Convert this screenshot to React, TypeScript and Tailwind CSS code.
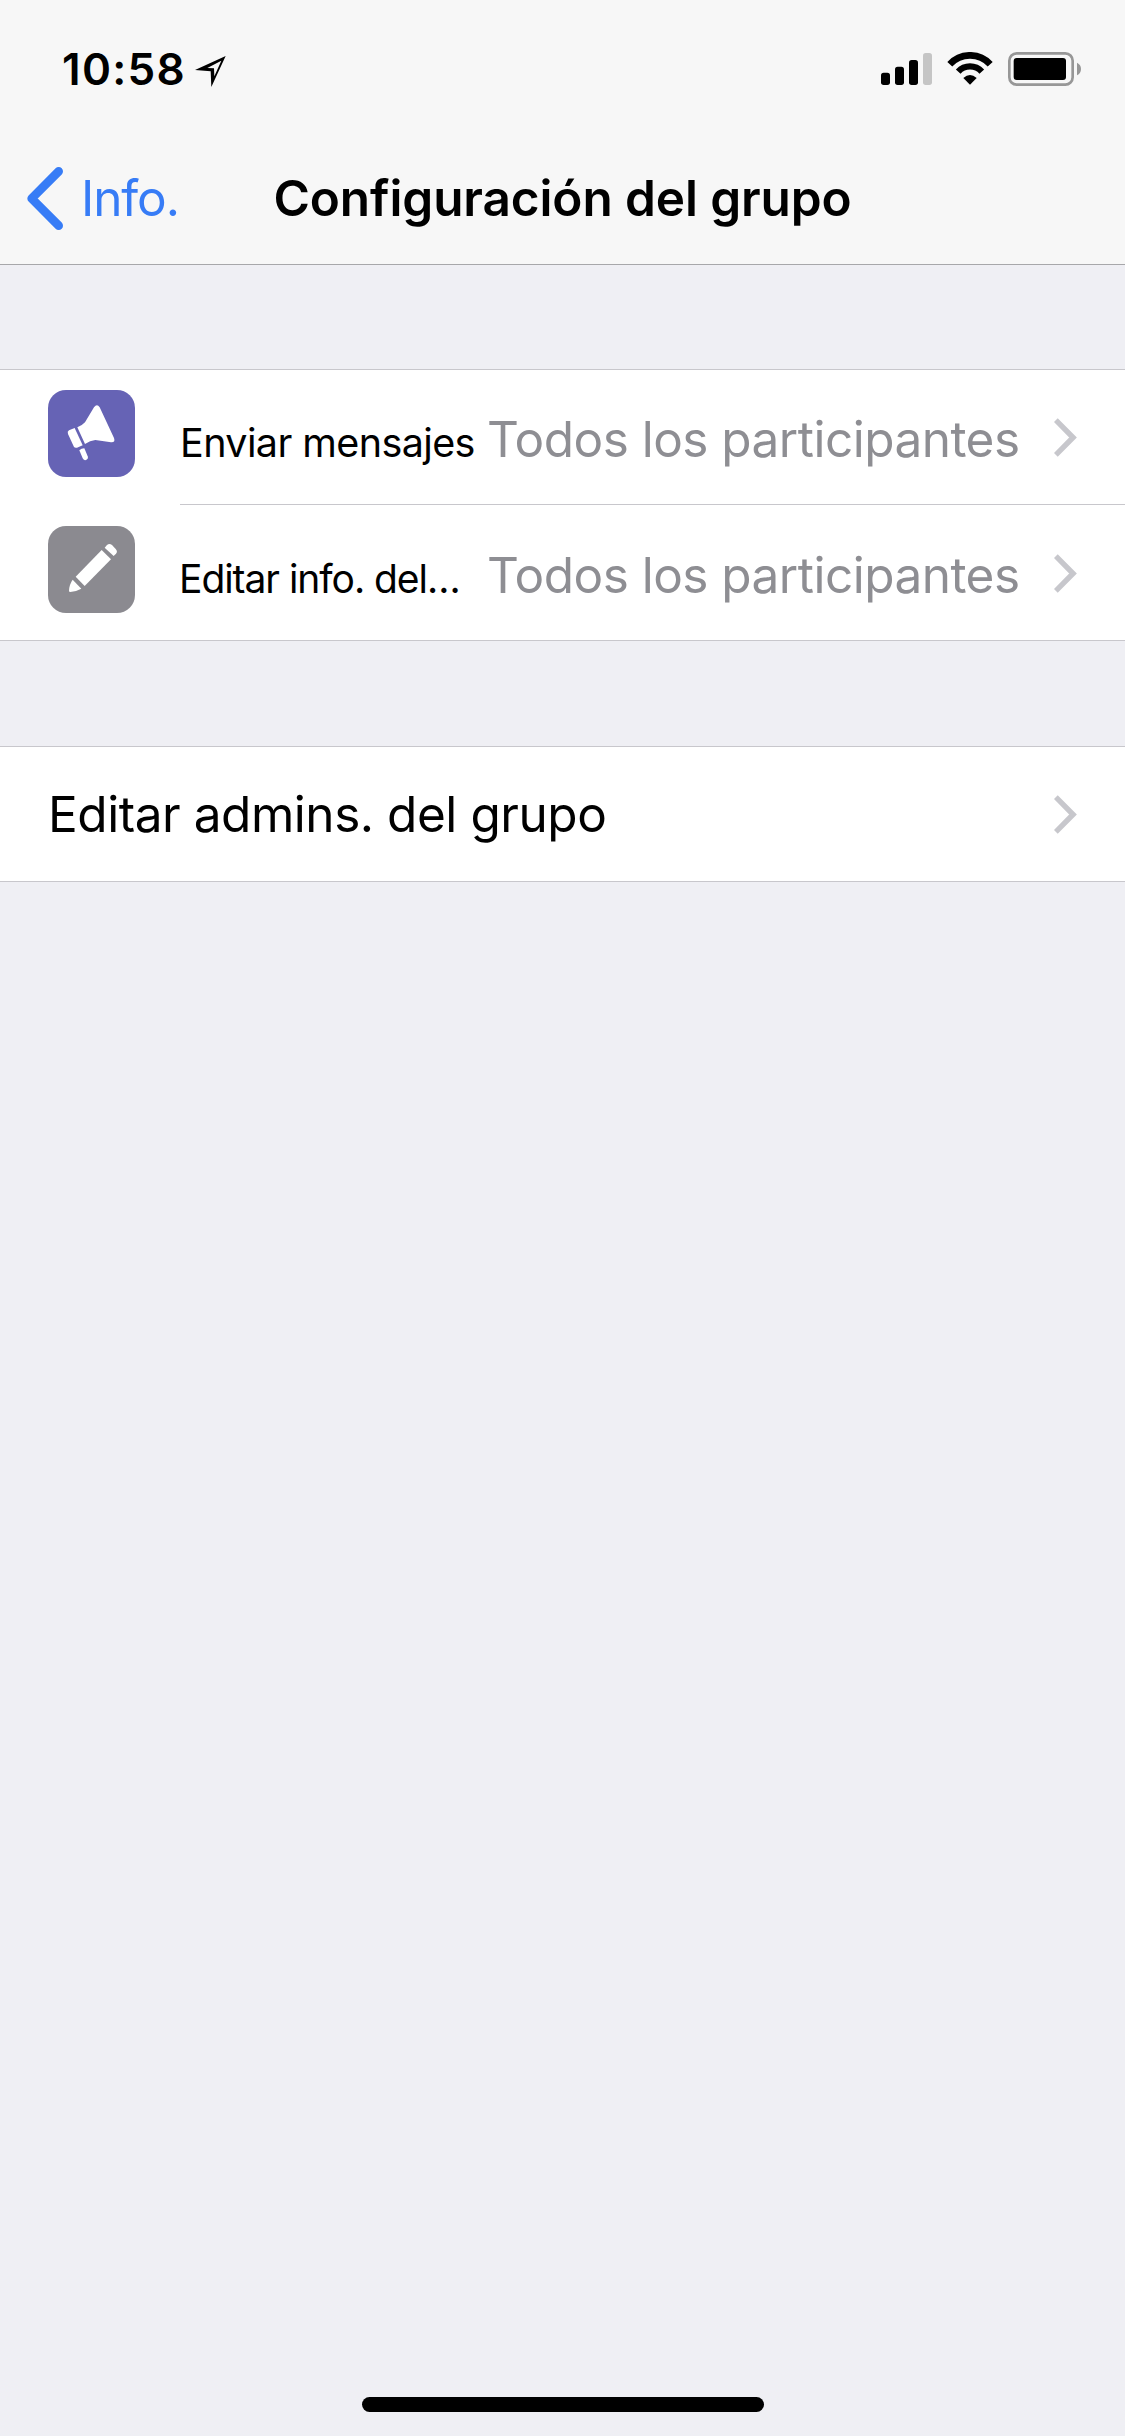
import type { ReactNode } from 'react';

function LocationIcon() {
  return (
    <svg viewBox="24 12 102 102" className="w-[34px] h-[34px] mt-0.5 ml-[8px]">
      <path fill="#000" fillRule="evenodd" d="M119 18 27 60 74 64 76 111ZM106 32 64 54 84 55 85 79Z" />
    </svg>
  );
}

function SignalIcon() {
  return (
    <svg viewBox="63 66 153 102" className="w-[51px] h-[34px]">
      <rect x="63" y="128" width="27" height="37" rx="8" />
      <rect x="105" y="110" width="27" height="55" rx="8" />
      <rect x="147" y="90" width="27" height="75" rx="8" />
      <rect x="189" y="69" width="27" height="96" rx="8" fill="#c5c5c5" />
    </svg>
  );
}

function WifiIcon() {
  return (
    <svg viewBox="21 21 138 102" className="w-[46px] h-[34px]">
      <path d="M29.4 57.7A82 82 0 0 1 150.6 57.7" fill="none" stroke="#000" strokeWidth="20" />
      <path d="M54.6 79.6A48 48 0 0 1 125.4 79.6" fill="none" stroke="#000" strokeWidth="19" />
      <path d="M70 99Q90 81 110 99L90 119Z" />
    </svg>
  );
}

function BatteryIcon() {
  return (
    <svg viewBox="444 66 219 102" className="w-[73px] h-[34px]">
      <rect x="448" y="70" width="190" height="94" rx="22" fill="none" stroke="#979797" strokeWidth="8" />
      <rect x="461" y="84" width="157" height="66" rx="9" />
      <path d="M651 98Q663 104 663 117T651 136Z" fill="#979797" />
    </svg>
  );
}

function Chevron() {
  return (
    <svg viewBox="161 161 70 117" className="w-[23px] h-[39px] shrink-0">
      <path d="M166.5 166.5 219 219.5 166.5 272.5" fill="none" stroke="#c7c7cc" strokeWidth="16.5" />
    </svg>
  );
}

function MegaphoneIcon() {
  return (
    <svg viewBox="54 90 261 261" className="w-full h-full" fill="#fff">
      <path d="M142 202Q156 197 165 187L192 142Q201 130 209 142L252 234Q257 248 243 247L196 240Q180 242 165 252Z" />
      <path d="M134 204 158 256 141 263Q134 265 131 259L114 222Q111 215 117 211Z" />
      <path d="M148 271Q154 265 163 265L173 289Q176 297 168 300Q161 302 158 295Z" />
    </svg>
  );
}

function PencilIcon() {
  return (
    <svg viewBox="54 498 261 261" className="w-full h-full" fill="#fff">
      <path d="M215 570 243 598 164 678 137 650Z" />
      <path d="M224 563 231 555Q238 549 246 555L257 567Q264 575 258 581L251 588Z" />
      <path d="M128 659 154 686Q140 694 121 696Q117 696 117 692Q118 673 128 659Z" />
    </svg>
  );
}

interface SettingRowProps {
  icon: ReactNode;
  iconClass: string;
  label: string;
  labelClass: string;
  value: string;
  className: string;
}

function SettingRow({ icon, iconClass, label, labelClass, value, className }: SettingRowProps) {
  return (
    <div className="flex h-[135px] pl-12">
      <div className={`w-[87px] h-[87px] rounded-[18px] shrink-0 ${iconClass}`}>{icon}</div>
      <div className={`ml-[45px] flex flex-1 items-center pr-12 ${className}`}>
        <div className="flex flex-1 items-baseline pt-1 whitespace-nowrap">
          <span className={`leading-none text-black ${labelClass}`}>{label}</span>
          <span className="text-[49.5px] leading-[60px] tracking-[-0.52px] text-[#8e8e93]">{value}</span>
        </div>
        <Chevron />
      </div>
    </div>
  );
}

export default function App() {
  return (
    <div className="flex flex-col w-[1125px] h-[2436px] bg-[#efeff4] font-['Inter','Liberation_Sans',sans-serif]">
      <header className="bg-[#f7f7f7] border-b border-[#a7a7aa]">
        <div className="flex items-start justify-between h-[132px] pt-[52px] pl-[62px] pr-[44px]">
          <div className="flex items-start">
            <span className="text-[44px] leading-[34px] font-semibold tracking-[1.3px]">10:58</span>
            <LocationIcon />
          </div>
          <div className="flex gap-[15px]">
            <SignalIcon />
            <WifiIcon />
            <BatteryIcon />
          </div>
        </div>
        <div className="grid grid-cols-[1fr_auto_1fr] items-center h-[132px]">
          <button type="button" className="flex items-center gap-[17px] pl-[26px] text-[#377cf6]">
            <svg viewBox="78 408 114 195" className="w-[38px] h-[65px]">
              <path
                d="M176 424 95 505.5 176 587"
                fill="none"
                stroke="currentColor"
                strokeWidth="26"
                strokeLinecap="round"
                strokeLinejoin="round"
              />
            </svg>
            <span className="text-[49.5px] leading-[60px] tracking-[-1.1px]">Info.</span>
          </button>
          <h1 className="text-[49.5px] leading-[60px] font-semibold tracking-[-0.1px] text-black">
            Configuración del grupo
          </h1>
        </div>
      </header>

      <main>
        <section className="mt-[104px] bg-white border-y border-[#c8c7cc]">
          <SettingRow
            icon={<MegaphoneIcon />}
            iconClass="mt-5 bg-[#6663b5]"
            label="Enviar mensajes"
            labelClass="w-[307px] text-[39.5px] tracking-[-0.6px]"
            value="Todos los participantes"
            className="border-b border-[#c8c7cc]"
          />
          <SettingRow
            icon={<PencilIcon />}
            iconClass="mt-[21px] bg-[#8b8a90]"
            label="Editar info. del…"
            labelClass="-ml-px w-[308px] text-[39px] tracking-[-1.05px]"
            value="Todos los participantes"
            className="pt-px"
          />
        </section>

        <section className="mt-[105px] flex items-center justify-between h-[136px] px-12 bg-white border-y border-[#c8c7cc]">
          <span className="text-[49.5px] leading-[60px] tracking-[-0.45px] text-black">Editar admins. del grupo</span>
          <Chevron />
        </section>
      </main>

      <div className="mt-auto mb-6 self-center w-[402px] h-[15px] rounded-full bg-black" />
    </div>
  );
}
